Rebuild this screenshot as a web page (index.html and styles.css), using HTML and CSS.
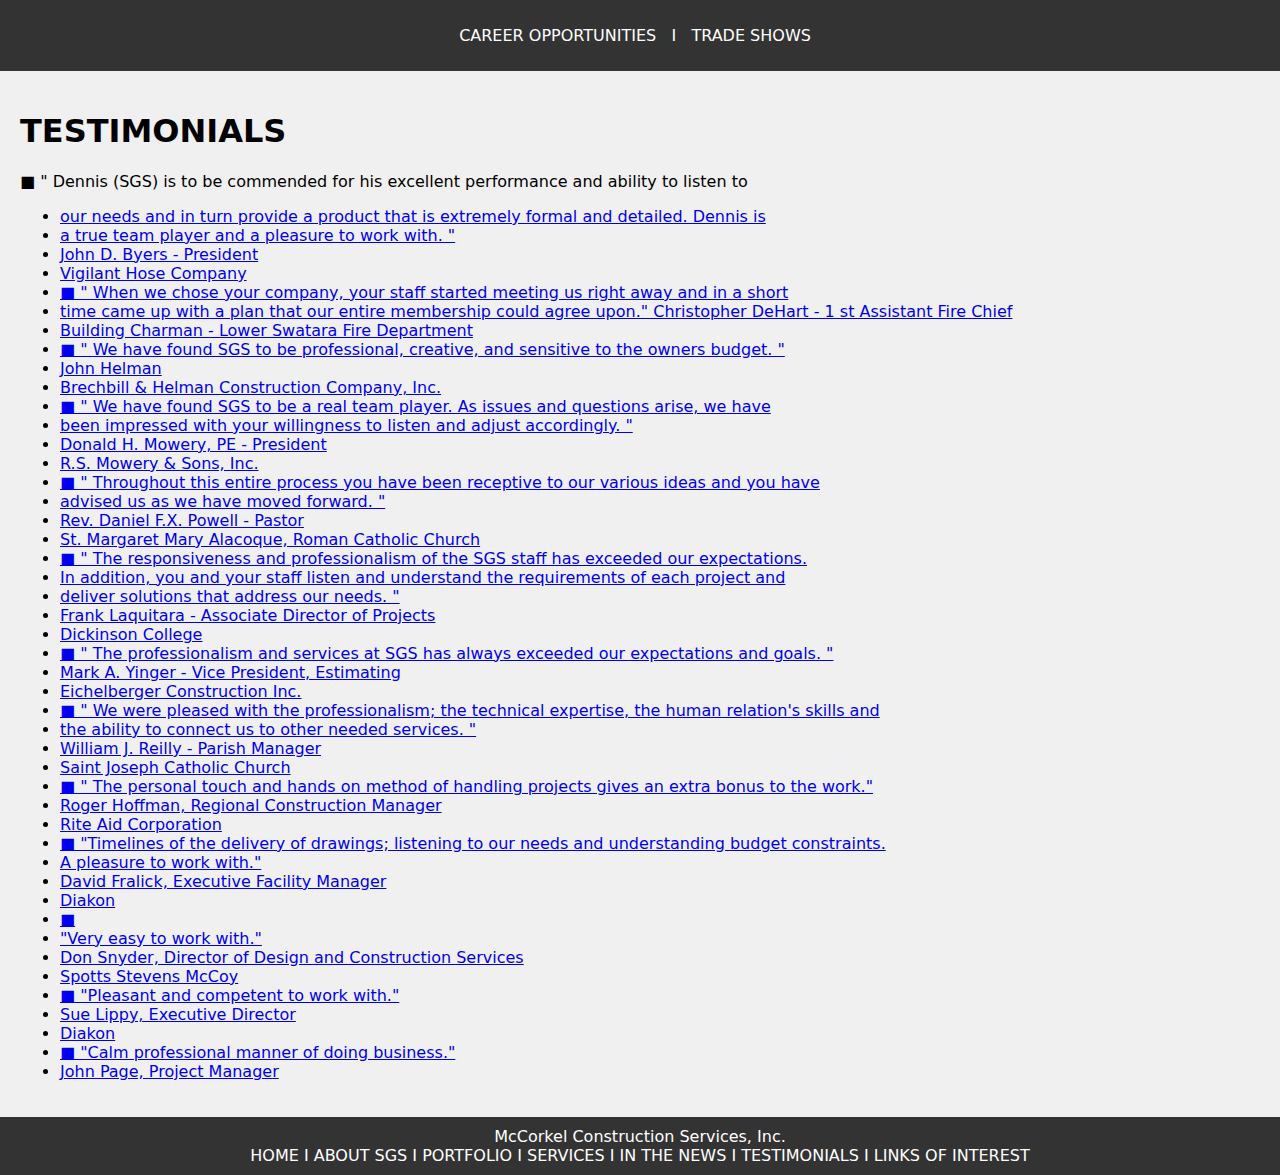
FILE: index.html
```html
<!DOCTYPE html>
<html>
<head>
<meta charset="utf-8">
<title>Testimonials</title>
<link rel="stylesheet" href="styles.css">
</head>
<body>
<header class="top">
  <nav class="topnav"><a href="#">CAREER OPPORTUNITIES</a>&nbsp;&nbsp;&nbsp;I&nbsp;&nbsp;&nbsp;<a href="#">TRADE SHOWS</a></nav>
</header>
<main class="content">
  <h1 class="title">TESTIMONIALS</h1>
  <p class="intro">■ " Dennis (SGS) is to be commended for his excellent performance and ability to listen to</p>
  <ul class="list">
    <li><a href="#">our needs and in turn provide a product that is extremely formal and detailed. Dennis is</a></li>
    <li><a href="#">a true team player and a pleasure to work with. "</a></li>
    <li><a href="#">John D. Byers - President</a></li>
    <li><a href="#">Vigilant Hose Company</a></li>
    <li><a href="#">■ " When we chose your company, your staff started meeting us right away and in a short</a></li>
    <li><a href="#">time came up with a plan that our entire membership could agree upon." Christopher DeHart - 1 st Assistant Fire Chief</a></li>
    <li><a href="#">Building Charman - Lower Swatara Fire Department</a></li>
    <li><a href="#">■ " We have found SGS to be professional, creative, and sensitive to the owners budget. "</a></li>
    <li><a href="#">John Helman</a></li>
    <li><a href="#">Brechbill &amp; Helman Construction Company, Inc.</a></li>
    <li><a href="#">■ " We have found SGS to be a real team player. As issues and questions arise, we have</a></li>
    <li><a href="#">been impressed with your willingness to listen and adjust accordingly. "</a></li>
    <li><a href="#">Donald H. Mowery, PE - President</a></li>
    <li><a href="#">R.S. Mowery &amp; Sons, Inc.</a></li>
    <li><a href="#">■ " Throughout this entire process you have been receptive to our various ideas and you have</a></li>
    <li><a href="#">advised us as we have moved forward. "</a></li>
    <li><a href="#">Rev. Daniel F.X. Powell - Pastor</a></li>
    <li><a href="#">St. Margaret Mary Alacoque, Roman Catholic Church</a></li>
    <li><a href="#">■ " The responsiveness and professionalism of the SGS staff has exceeded our expectations.</a></li>
    <li><a href="#">In addition, you and your staff listen and understand the requirements of each project and</a></li>
    <li><a href="#">deliver solutions that address our needs. "</a></li>
    <li><a href="#">Frank Laquitara - Associate Director of Projects</a></li>
    <li><a href="#">Dickinson College</a></li>
    <li><a href="#">■ " The professionalism and services at SGS has always exceeded our expectations and goals. "</a></li>
    <li><a href="#">Mark A. Yinger - Vice President, Estimating</a></li>
    <li><a href="#">Eichelberger Construction Inc.</a></li>
    <li><a href="#">■ " We were pleased with the professionalism; the technical expertise, the human relation's skills and</a></li>
    <li><a href="#">the ability to connect us to other needed services. "</a></li>
    <li><a href="#">William J. Reilly - Parish Manager</a></li>
    <li><a href="#">Saint Joseph Catholic Church</a></li>
    <li><a href="#">■ " The personal touch and hands on method of handling projects gives an extra bonus to the work."</a></li>
    <li><a href="#">Roger Hoffman, Regional Construction Manager</a></li>
    <li><a href="#">Rite Aid Corporation</a></li>
    <li><a href="#">■ "Timelines of the delivery of drawings; listening to our needs and understanding budget constraints.</a></li>
    <li><a href="#">A pleasure to work with."</a></li>
    <li><a href="#">David Fralick, Executive Facility Manager</a></li>
    <li><a href="#">Diakon</a></li>
    <li><a href="#">■</a></li>
    <li><a href="#">"Very easy to work with."</a></li>
    <li><a href="#">Don Snyder, Director of Design and Construction Services</a></li>
    <li><a href="#">Spotts Stevens McCoy</a></li>
    <li><a href="#">■ "Pleasant and competent to work with."</a></li>
    <li><a href="#">Sue Lippy, Executive Director</a></li>
    <li><a href="#">Diakon</a></li>
    <li><a href="#">■ "Calm professional manner of doing business."</a></li>
    <li><a href="#">John Page, Project Manager</a></li>
  </ul>
</main>
<footer class="foot">
  <div class="company">McCorkel Construction Services, Inc.</div>
  <nav class="footnav"><a href="#">HOME</a> I <a href="#">ABOUT SGS</a> I <a href="#">PORTFOLIO</a> I <a href="#">SERVICES</a> I <a href="#">IN THE NEWS</a> I <a href="#">TESTIMONIALS</a> I <a href="#">LINKS OF INTEREST</a></nav>
</footer>
</body>
</html>
```
FILE: styles.css
```css
html, body {
  margin: 0;
  padding: 0;
}
body {
  background: #f0f0f0;
  font-family: "DejaVu Sans", sans-serif;
  font-size: 16px;
  color: #000;
}
.top {
  background: #333333;
  color: #ffffff;
  padding: 26px 0;
  text-align: center;
  line-height: 19px;
}
.topnav {
  padding-right: 10px;
}
.topnav a {
  color: #ffffff;
  text-decoration: none;
}
.content {
  padding: 20px;
}
.title {
  font-size: 32px;
  font-weight: bold;
  margin: 21.44px 0;
}
.intro {
  margin: 16px 0;
  line-height: 19px;
}
.list {
  margin: 16px 0;
  padding-left: 40px;
  line-height: 19px;
}
.list a {
  color: #0000ee;
  text-decoration: underline;
}
.foot {
  background: #333333;
  color: #ffffff;
  text-align: center;
  padding: 10px 0;
  line-height: 19px;
}
.foot a {
  color: #ffffff;
  text-decoration: none;
}
```
